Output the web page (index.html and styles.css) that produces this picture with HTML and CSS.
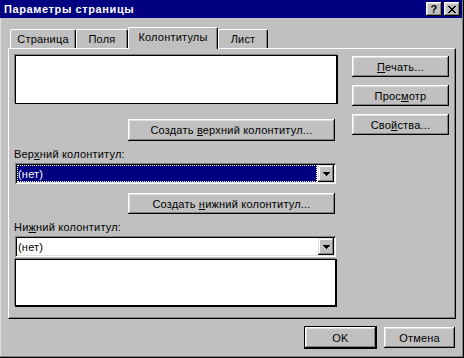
FILE: index.html
```html
<!DOCTYPE html>
<html lang="ru">
<head>
    <meta charset="UTF-8">
    <title>Параметры страницы</title>
    <link rel="stylesheet" href="styles.css">
</head>
<body>
    <div class="window">
        <div class="titlebar">
            <span class="title">Параметры страницы</span>
            <div class="title-buttons">
                <span class="tbtn help">?</span>
                <span class="tbtn close">
                    <svg width="8" height="7" viewBox="0 0 8 7"><path d="M0 0h2v1h-2z M6 0h2v1h-2z M1 1h2v1h-2z M5 1h2v1h-2z M2 2h4v1h-4z M3 3h2v1h-2z M2 4h4v1h-4z M1 5h2v1h-2z M5 5h2v1h-2z M0 6h2v1h-2z M6 6h2v1h-2z" fill="#000"/></svg>
                </span>
            </div>
        </div>

        <div class="tabs">
            <div class="tab tab-page">Страница</div>
            <div class="tab tab-margins">Поля</div>
            <div class="tab tab-hf active">Колонтитулы</div>
            <div class="tab tab-sheet">Лист</div>
        </div>

        <div class="panel">
            <div class="left">
                <div class="preview"></div>
                <button class="btn btn-wide btn-head">Создать <u>в</u>ерхний колонтитул...</button>
                <label class="caption">Вер<u>х</u>ний колонтитул:</label>
                <div class="combo focused">
                    <span class="combo-text"><span class="combo-value">(нет)</span></span>
                    <span class="drop"><svg width="7" height="4" viewBox="0 0 7 4"><path d="M0 0h7v1h-7z M1 1h5v1h-5z M2 2h3v1h-3z M3 3h1v1h-1z" fill="#000"/></svg></span>
                </div>
                <button class="btn btn-wide btn-foot">Создать <u>н</u>ижний колонтитул...</button>
                <label class="caption">Ни<u>ж</u>ний колонтитул:</label>
                <div class="combo">
                    <span class="combo-text"><span class="combo-value">(нет)</span></span>
                    <span class="drop"><svg width="7" height="4" viewBox="0 0 7 4"><path d="M0 0h7v1h-7z M1 1h5v1h-5z M2 2h3v1h-3z M3 3h1v1h-1z" fill="#000"/></svg></span>
                </div>
                <div class="preview preview-foot"></div>
            </div>
            <div class="right">
                <button class="btn side-btn"><u>П</u>ечать...</button>
                <button class="btn side-btn">Прос<u>м</u>отр</button>
                <button class="btn side-btn">Сво<u>й</u>ства...</button>
            </div>
        </div>

        <div class="actions">
            <button class="btn btn-default">OK</button>
            <button class="btn btn-cancel">Отмена</button>
        </div>
    </div>
</body>
</html>
```

FILE: styles.css
```css
body {
    margin: 0;
    font-family: "Liberation Sans", Arial, sans-serif;
    font-size: 11px;
    letter-spacing: 0.2px;
    color: #000;
}

.window {
    width: 464px;
    height: 358px;
    box-sizing: border-box;
    background: #c0c0c0;
    box-shadow: inset -1px -1px #000, inset -2px -2px #808080, inset 1px 0 #dfdfdf;
    display: flex;
    flex-direction: column;
}

/* title bar */
.titlebar {
    height: 18px;
    margin-right: 2px;
    padding: 0 2px 0 4px;
    background: #000080;
    color: #fff;
    display: flex;
    align-items: center;
    justify-content: space-between;
}

.title {
    font-weight: bold;
    letter-spacing: 0.6px;
}

.title-buttons {
    display: flex;
    gap: 2px;
}

.tbtn {
    width: 16px;
    height: 14px;
    box-sizing: border-box;
    background: #c0c0c0;
    color: #000;
    box-shadow: inset -1px -1px #000, inset 1px 1px #fff, inset -2px -2px #808080, inset 2px 2px #dfdfdf;
    display: flex;
    align-items: center;
    justify-content: center;
}

.help {
    font-weight: bold;
    font-size: 11px;
    padding-bottom: 1px;
}

.close svg {
    display: block;
}

/* tabs */
.tabs {
    height: 21px;
    margin-top: 9px;
    padding-left: 10px;
    display: flex;
    align-items: flex-end;
}

.tab {
    height: 19px;
    box-sizing: border-box;
    border-top: 1px solid #fff;
    border-left: 1px solid #fff;
    border-right: 1px solid #000;
    border-radius: 2px 2px 0 0;
    box-shadow: inset -1px 0 #808080;
    display: flex;
    align-items: center;
    justify-content: center;
}

.tab-page { width: 66px; }
.tab-margins { width: 52px; }
.tab-hf { width: 90px; }
.tab-sheet { width: 50px; }

.tab.active {
    height: 22px;
    margin-bottom: -1px;
    padding-bottom: 3px;
    position: relative;
    z-index: 1;
    background: #c0c0c0;
}

/* panel */
.panel {
    width: 448px;
    height: 271px;
    margin-left: 8px;
    box-sizing: border-box;
    border-top: 1px solid #fff;
    border-left: 1px solid #fff;
    border-right: 1px solid #000;
    border-bottom: 1px solid #000;
    box-shadow: inset -1px -1px #808080;
    padding: 6px 0 0 6px;
    display: flex;
}

.left {
    width: 323px;
    display: flex;
    flex-direction: column;
}

.preview {
    height: 49px;
    box-sizing: border-box;
    background: #fff;
    border: 1px solid #000;
    border-right-width: 2px;
    box-shadow: -1px -1px 0 #808080;
}

.preview-foot {
    width: 322px;
    height: 48px;
    margin-top: 2px;
    border-bottom-width: 2px;
}

.btn {
    height: 21px;
    box-sizing: border-box;
    padding: 0;
    border: none;
    background: #c0c0c0;
    color: #000;
    font: inherit;
    letter-spacing: inherit;
    box-shadow: inset -1px -1px #000, inset 1px 1px #fff, inset -2px -2px #808080, inset 2px 2px #dfdfdf;
}

.btn-wide {
    width: 207px;
    margin-left: 113px;
}

.btn-head {
    height: 22px;
    margin-top: 15px;
}

.btn-foot {
    margin-top: 9px;
}

.caption {
    display: block;
    height: 13px;
    line-height: 13px;
    margin-top: 7px;
    margin-left: -1px;
}

.combo {
    width: 321px;
    height: 21px;
    margin-top: 2px;
    box-sizing: border-box;
    padding: 2px;
    background: #fff;
    box-shadow: inset 1px 1px #808080, inset -1px -1px #fff, inset 2px 2px #000, inset -2px -2px #dfdfdf;
    display: flex;
}

.combo-text {
    flex: 1;
    display: flex;
    align-items: center;
    padding-left: 1px;
    margin-right: 1px;
}

.combo.focused .combo-text {
    background: #000080;
    color: #fff;
    outline: 1px dotted #fff;
    outline-offset: -1px;
}

.drop {
    width: 16px;
    box-sizing: border-box;
    background: #c0c0c0;
    box-shadow: inset -1px -1px #000, inset 1px 1px #dfdfdf, inset -2px -2px #808080, inset 2px 2px #fff;
    display: flex;
    align-items: center;
    justify-content: center;
}

.drop svg {
    display: block;
}

.right {
    width: 97px;
    margin-left: 14px;
    display: flex;
    flex-direction: column;
}

.side-btn {
    width: 97px;
    margin-top: 8px;
}

.side-btn:first-child {
    margin-top: 1px;
}

/* bottom buttons */
.actions {
    margin-top: 7px;
    padding-right: 9px;
    display: flex;
    justify-content: flex-end;
    align-items: center;
    gap: 7px;
}

.btn-default {
    width: 73px;
    height: 23px;
    border: 1px solid #000;
}

.btn-cancel {
    width: 71px;
}
```
